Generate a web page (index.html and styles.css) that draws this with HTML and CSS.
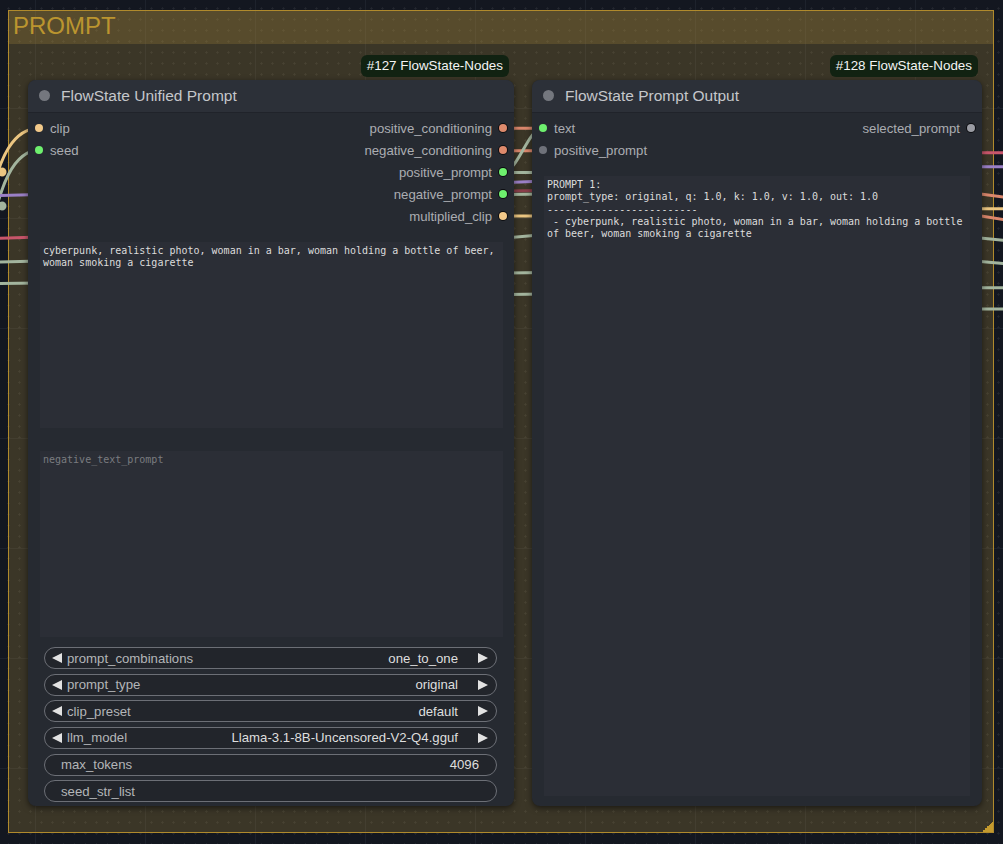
FILE: index.html
```html
<!DOCTYPE html>
<html>
<head>
<meta charset="utf-8">
<link rel="stylesheet" href="styles.css">
</head>
<body>
<div class="canvas">
  <div class="group">
    <div class="group-title">PROMPT</div>
    <div class="group-resize"></div>
  </div>

  <svg class="wires" width="1003" height="844" viewBox="0 0 1003 844">
    <g fill="none" stroke-width="3" stroke-linecap="round">
      <!-- left strip -->
      <path d="M-8,192 C0,160 12,128 40,128" stroke="#ecc681"/>
      <path d="M-8,226 C0,190 12,150 40,150" stroke="#a3b59e"/>
      <path d="M-5,195.5 L40,194.5" stroke="#9b80c6"/>
      <path d="M-5,238.5 L40,237" stroke="#c9566b"/>
      <path d="M-5,262 L40,261" stroke="#a3b59e"/>
      <path d="M-5,283.5 L40,283" stroke="#a3b59e"/>
      <!-- between nodes -->
      <path d="M505,128.3 L545,128.3" stroke="#db876c"/>
      <path d="M505,150.7 L545,150.7" stroke="#db876c"/>
      <path d="M503,172 C518,172 528,128 543,128" stroke="#a3b59e"/>
      <path d="M505,172.5 L545,172.5" stroke="#a3b59e"/>
      <path d="M505,182.5 L545,181" stroke="#9b80c6"/>
      <path d="M505,191 L545,190.5" stroke="#8a3e4a"/>
      <path d="M505,194.5 L545,194" stroke="#a3b59e"/>
      <path d="M505,216 L545,216" stroke="#ecc681"/>
      <path d="M505,238 L545,234.5" stroke="#a3b59e"/>
      <path d="M505,273 L545,272.5" stroke="#a3b59e"/>
      <path d="M505,294.5 L545,294" stroke="#a3b59e"/>
      <!-- right strip -->
      <path d="M975,152.7 L1010,152.7" stroke="#c9566b"/>
      <path d="M975,166.7 L1010,166.7" stroke="#9b80c6"/>
      <path d="M975,193.3 L1010,198" stroke="#db876c"/>
      <path d="M975,208.7 L1010,208.7" stroke="#ecc681"/>
      <path d="M975,215 L1010,220.5" stroke="#db876c"/>
      <path d="M975,237.5 L1010,241" stroke="#a3b59e"/>
      <path d="M975,261 L1010,264" stroke="#a3b59e"/>
      <path d="M975,287.7 L1010,287.7" stroke="#a3b59e"/>
      <path d="M975,309 L1010,309" stroke="#a3b59e"/>
    </g>
    <circle cx="2" cy="172" r="4.5" fill="#ecc681"/>
    <circle cx="2" cy="206" r="4.5" fill="#a3b59e"/>
  </svg>

  <div class="node node-a">
    <div class="badge">#127 FlowState-Nodes</div>
    <div class="node-title"><span class="title-dot"></span>FlowState Unified Prompt</div>
    <div class="node-body">
      <div class="slots">
        <div class="inputs">
          <div class="slot"><span class="dot c-clip"></span>clip</div>
          <div class="slot"><span class="dot c-green"></span>seed</div>
        </div>
        <div class="outputs">
          <div class="slot">positive_conditioning<span class="dot ring c-cond"></span></div>
          <div class="slot">negative_conditioning<span class="dot ring c-cond"></span></div>
          <div class="slot">positive_prompt<span class="dot ring c-green"></span></div>
          <div class="slot">negative_prompt<span class="dot ring c-green"></span></div>
          <div class="slot">multiplied_clip<span class="dot ring c-clip"></span></div>
        </div>
      </div>
      <div class="textarea ta-pos">cyberpunk, realistic photo, woman in a bar, woman holding a bottle of beer,
woman smoking a cigarette</div>
      <div class="textarea ta-neg placeholder">negative_text_prompt</div>
      <div class="widgets">
        <div class="pill combo"><span class="arrow-l"></span><span class="w-label">prompt_combinations</span><span class="w-value">one_to_one</span><span class="arrow-r"></span></div>
        <div class="pill combo"><span class="arrow-l"></span><span class="w-label">prompt_type</span><span class="w-value">original</span><span class="arrow-r"></span></div>
        <div class="pill combo"><span class="arrow-l"></span><span class="w-label">clip_preset</span><span class="w-value">default</span><span class="arrow-r"></span></div>
        <div class="pill combo"><span class="arrow-l"></span><span class="w-label">llm_model</span><span class="w-value">Llama-3.1-8B-Uncensored-V2-Q4.gguf</span><span class="arrow-r"></span></div>
        <div class="pill plain"><span class="w-label">max_tokens</span><span class="w-value">4096</span></div>
        <div class="pill plain"><span class="w-label">seed_str_list</span></div>
      </div>
    </div>
  </div>

  <div class="node node-b">
    <div class="badge">#128 FlowState-Nodes</div>
    <div class="node-title"><span class="title-dot"></span>FlowState Prompt Output</div>
    <div class="node-body">
      <div class="slots">
        <div class="inputs">
          <div class="slot"><span class="dot c-green"></span>text</div>
          <div class="slot"><span class="dot c-gray"></span>positive_prompt</div>
        </div>
        <div class="outputs">
          <div class="slot">selected_prompt<span class="dot ring c-grayout"></span></div>
        </div>
      </div>
      <div class="textarea ta-out">PROMPT 1:
prompt_type: original, q: 1.0, k: 1.0, v: 1.0, out: 1.0
-------------------------
 - cyberpunk, realistic photo, woman in a bar, woman holding a bottle
of beer, woman smoking a cigarette</div>
    </div>
  </div>
</div>
</body>
</html>
```

FILE: styles.css
```css
* { box-sizing: border-box; }

body {
  margin: 0;
  background: #131720;
  font-family: "Liberation Sans", Arial, sans-serif;
}

.canvas {
  position: relative;
  width: 1003px;
  height: 844px;
  overflow: hidden;
  background-color: #131720;
  background-image:
    linear-gradient(#1d222c 1px, transparent 1px),
    linear-gradient(90deg, #1d222c 1px, transparent 1px),
    radial-gradient(circle, rgba(255,255,255,0.07) 0.9px, transparent 1.3px);
  background-size: 110px 110px, 110px 110px, 11px 11px;
  background-position: 0 108px, 35px 0, 3px 3px;
}

.group {
  position: absolute;
  left: 8px;
  top: 10px;
  width: 986px;
  height: 823px;
  border: 1px solid #b08a2c;
  background: rgba(170, 140, 60, 0.27);
}

.group-title {
  height: 33px;
  background: rgba(170, 140, 60, 0.25);
  color: #bb952f;
  font-size: 24px;
  line-height: 30px;
  padding-left: 4px;
}

.group-resize {
  position: absolute;
  right: 0;
  bottom: 0;
  width: 11px;
  height: 11px;
  background: linear-gradient(135deg, transparent 50%, #c49a2e 50%);
}

.wires {
  position: absolute;
  left: 0;
  top: 0;
}

.node {
  position: absolute;
  top: 80px;
  height: 726px;
  display: flex;
  flex-direction: column;
  background: #262a31;
  border-radius: 8px;
  box-shadow: 0 2px 6px rgba(0, 0, 0, 0.55);
}

.node-a { left: 28px; width: 486px; }
.node-b { left: 532px; width: 450px; }

.badge {
  position: absolute;
  top: -25px;
  right: 5px;
  height: 22px;
  padding: 0 6px;
  background: #112212;
  color: #f4f4f4;
  font-size: 13.4px;
  line-height: 22px;
  border-radius: 6px;
  white-space: nowrap;
}
.node-b .badge { right: 4px; }

.node-title {
  height: 33px;
  flex: none;
  display: flex;
  align-items: center;
  gap: 11px;
  padding: 0 0 1px 11px;
  background: #2c3038;
  border-bottom: 1px solid #20232a;
  border-radius: 8px 8px 0 0;
  color: #c5c7cb;
  font-size: 15.5px;
}

.title-dot {
  width: 11px;
  height: 11px;
  border-radius: 50%;
  background: #74777e;
}

.node-body {
  flex: 1;
  display: flex;
  flex-direction: column;
  padding-top: 4px;
}

.slots {
  display: flex;
  justify-content: space-between;
}

.slot {
  height: 22px;
  display: flex;
  align-items: center;
  gap: 7px;
  font-size: 13.2px;
  color: #abadb1;
  white-space: nowrap;
}

.inputs .slot { padding-left: 7px; }
.outputs .slot { justify-content: flex-end; padding-right: 7px; }

.dot {
  width: 8px;
  height: 8px;
  border-radius: 50%;
  flex: none;
}
.dot.ring { box-shadow: 0 0 0 1px #0c0d10; }

.c-clip { background: #f2c98a; }
.c-green { background: #6ef06e; }
.c-cond { background: #dd8a6c; }
.c-gray { background: #6f727a; }
.c-grayout { background: #9a9ca3; }

.textarea {
  background: #2b2e36;
  font-family: "DejaVu Sans Mono", "Liberation Mono", monospace;
  font-size: 10px;
  line-height: 12.5px;
  color: #dcdcdc;
  white-space: pre;
  overflow: hidden;
}

.ta-pos {
  margin: 15px 11px 0 12px;
  height: 186px;
  padding: 2.5px 3px;
}

.ta-neg {
  margin: 23px 11px 0 12px;
  height: 186px;
  padding: 2.5px 3px;
}

.placeholder { color: #7a7c80; }

.ta-out {
  flex: 1;
  margin: 15px 12px 10px 12px;
  padding: 3px 3px;
  line-height: 12.3px;
}

.widgets {
  margin: 10px 17px 0 16px;
  display: flex;
  flex-direction: column;
  gap: 4.67px;
}

.pill {
  height: 22px;
  display: flex;
  align-items: center;
  border: 1px solid #6c6f76;
  border-radius: 11px;
  background: #22252b;
  font-size: 13.2px;
  white-space: nowrap;
}

.combo { padding: 0 8px 0 7px; }
.plain { padding: 0 17px 0 16px; }

.w-label { color: #b3b5b8; flex: 1; }
.combo .w-label { margin-left: 5px; }
.w-value { color: #dedede; }

.arrow-l, .arrow-r {
  width: 0;
  height: 0;
  border-top: 5.5px solid transparent;
  border-bottom: 5.5px solid transparent;
}
.arrow-l { border-right: 10px solid #e2e2e2; }
.arrow-r { border-left: 10px solid #e2e2e2; margin-left: 20px; }
```
